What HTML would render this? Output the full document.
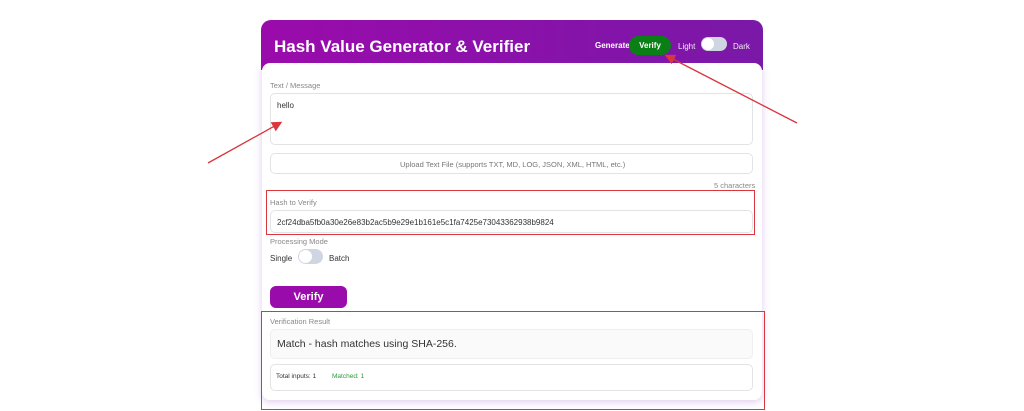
<!DOCTYPE html>
<html><head><style>
*{box-sizing:border-box;margin:0;padding:0}
body{width:1024px;height:411px;background:#fff;font-family:"Liberation Sans",sans-serif;position:relative;overflow:hidden}
.card{position:absolute;left:261px;top:20px;width:502px;height:50px;border-radius:10px 10px 0 0;background:linear-gradient(90deg,#9a0bab,#7a18a8)}
.title{position:absolute;left:274px;top:37px;color:#fff;font-weight:bold;font-size:17px}
.body{position:absolute;left:262px;top:63px;width:500px;height:337px;background:#fff;border-radius:8px;box-shadow:0 2px 8px rgba(150,80,200,.3)}
.lbl{position:absolute;font-size:7.5px;color:#888}
.box{position:absolute;border:1px solid #e3e3e3;border-radius:5px;background:#fff}
.t{position:absolute;font-size:8px;color:#333}
.red{position:absolute;border:1.5px solid #d9363e}
</style></head><body>
<div class="card"></div>
<div class="title">Hash Value Generator &amp; Verifier</div>
<div class="t" style="left:595px;top:41px;color:#fff;font-weight:bold;font-size:8px">Generate</div>
<div style="position:absolute;left:629px;top:36px;width:42px;height:19px;background:#0a7f16;border-radius:10px;color:#fff;font-size:8px;font-weight:bold;text-align:center;line-height:19px">Verify</div>
<div class="t" style="left:678px;top:42px;color:#eee">Light</div>
<div style="position:absolute;left:701px;top:37px;width:26px;height:14px;background:#cfd6e2;border-radius:7px"><div style="position:absolute;left:1px;top:1px;width:12px;height:12px;background:#fff;border-radius:50%"></div></div>
<div class="t" style="left:733px;top:42px;color:#eee">Dark</div>
<div class="body"></div>
<div class="lbl" style="left:270px;top:81px">Text / Message</div>
<div class="box" style="left:270px;top:93px;width:483px;height:52px"></div>
<div class="t" style="left:277px;top:101px">hello</div>
<div class="box" style="left:270px;top:153px;width:483px;height:21px"></div>
<div class="lbl" style="left:400px;top:160px;color:#777">Upload Text File (supports TXT, MD, LOG, JSON, XML, HTML, etc.)</div>
<div class="lbl" style="left:714px;top:181px">5 characters</div>
<div class="lbl" style="left:270px;top:198px">Hash to Verify</div>
<div class="box" style="left:270px;top:210px;width:483px;height:23px"></div>
<div class="t" style="left:277px;top:218px;font-size:8px">2cf24dba5fb0a30e26e83b2ac5b9e29e1b161e5c1fa7425e73043362938b9824</div>
<div class="red" style="left:266px;top:190px;width:489px;height:45px"></div>
<div class="lbl" style="left:270px;top:237px">Processing Mode</div>
<div class="t" style="left:270px;top:254px">Single</div>
<div style="position:absolute;left:298px;top:249px;width:25px;height:15px;background:#cfd6e2;border-radius:8px"><div style="position:absolute;left:1px;top:1px;width:13px;height:13px;background:#fff;border-radius:50%"></div></div>
<div class="t" style="left:329px;top:254px">Batch</div>
<div style="position:absolute;left:270px;top:286px;width:77px;height:22px;background:#9a0bab;border-radius:6px;color:#fff;font-weight:bold;font-size:11px;text-align:center;line-height:22px">Verify</div>
<div class="lbl" style="left:270px;top:317px">Verification Result</div>
<div class="box" style="left:270px;top:329px;width:483px;height:30px;background:#fafafa;border-color:#eee"></div>
<div class="t" style="left:277px;top:338px;font-size:10.5px">Match - hash matches using SHA-256.</div>
<div class="box" style="left:270px;top:364px;width:483px;height:27px"></div>
<div class="t" style="left:276px;top:373px;font-size:6.5px">Total inputs: 1</div>
<div class="t" style="left:332px;top:373px;font-size:6.5px;color:#2a9a3a">Matched: 1</div>
<div class="red" style="left:261px;top:311px;width:504px;height:99px"></div>
<svg style="position:absolute;left:0;top:0" width="1024" height="411">
<defs><marker id="a" markerWidth="8" markerHeight="8" refX="6" refY="4" orient="auto"><path d="M0,0L8,4L0,8Z" fill="#d9363e"/></marker></defs>
<line x1="208" y1="163" x2="280" y2="123" stroke="#d9363e" stroke-width="1.3" marker-end="url(#a)"/>
<line x1="797" y1="123" x2="667" y2="56" stroke="#d9363e" stroke-width="1.3" marker-end="url(#a)"/>
</svg>
</body></html>
